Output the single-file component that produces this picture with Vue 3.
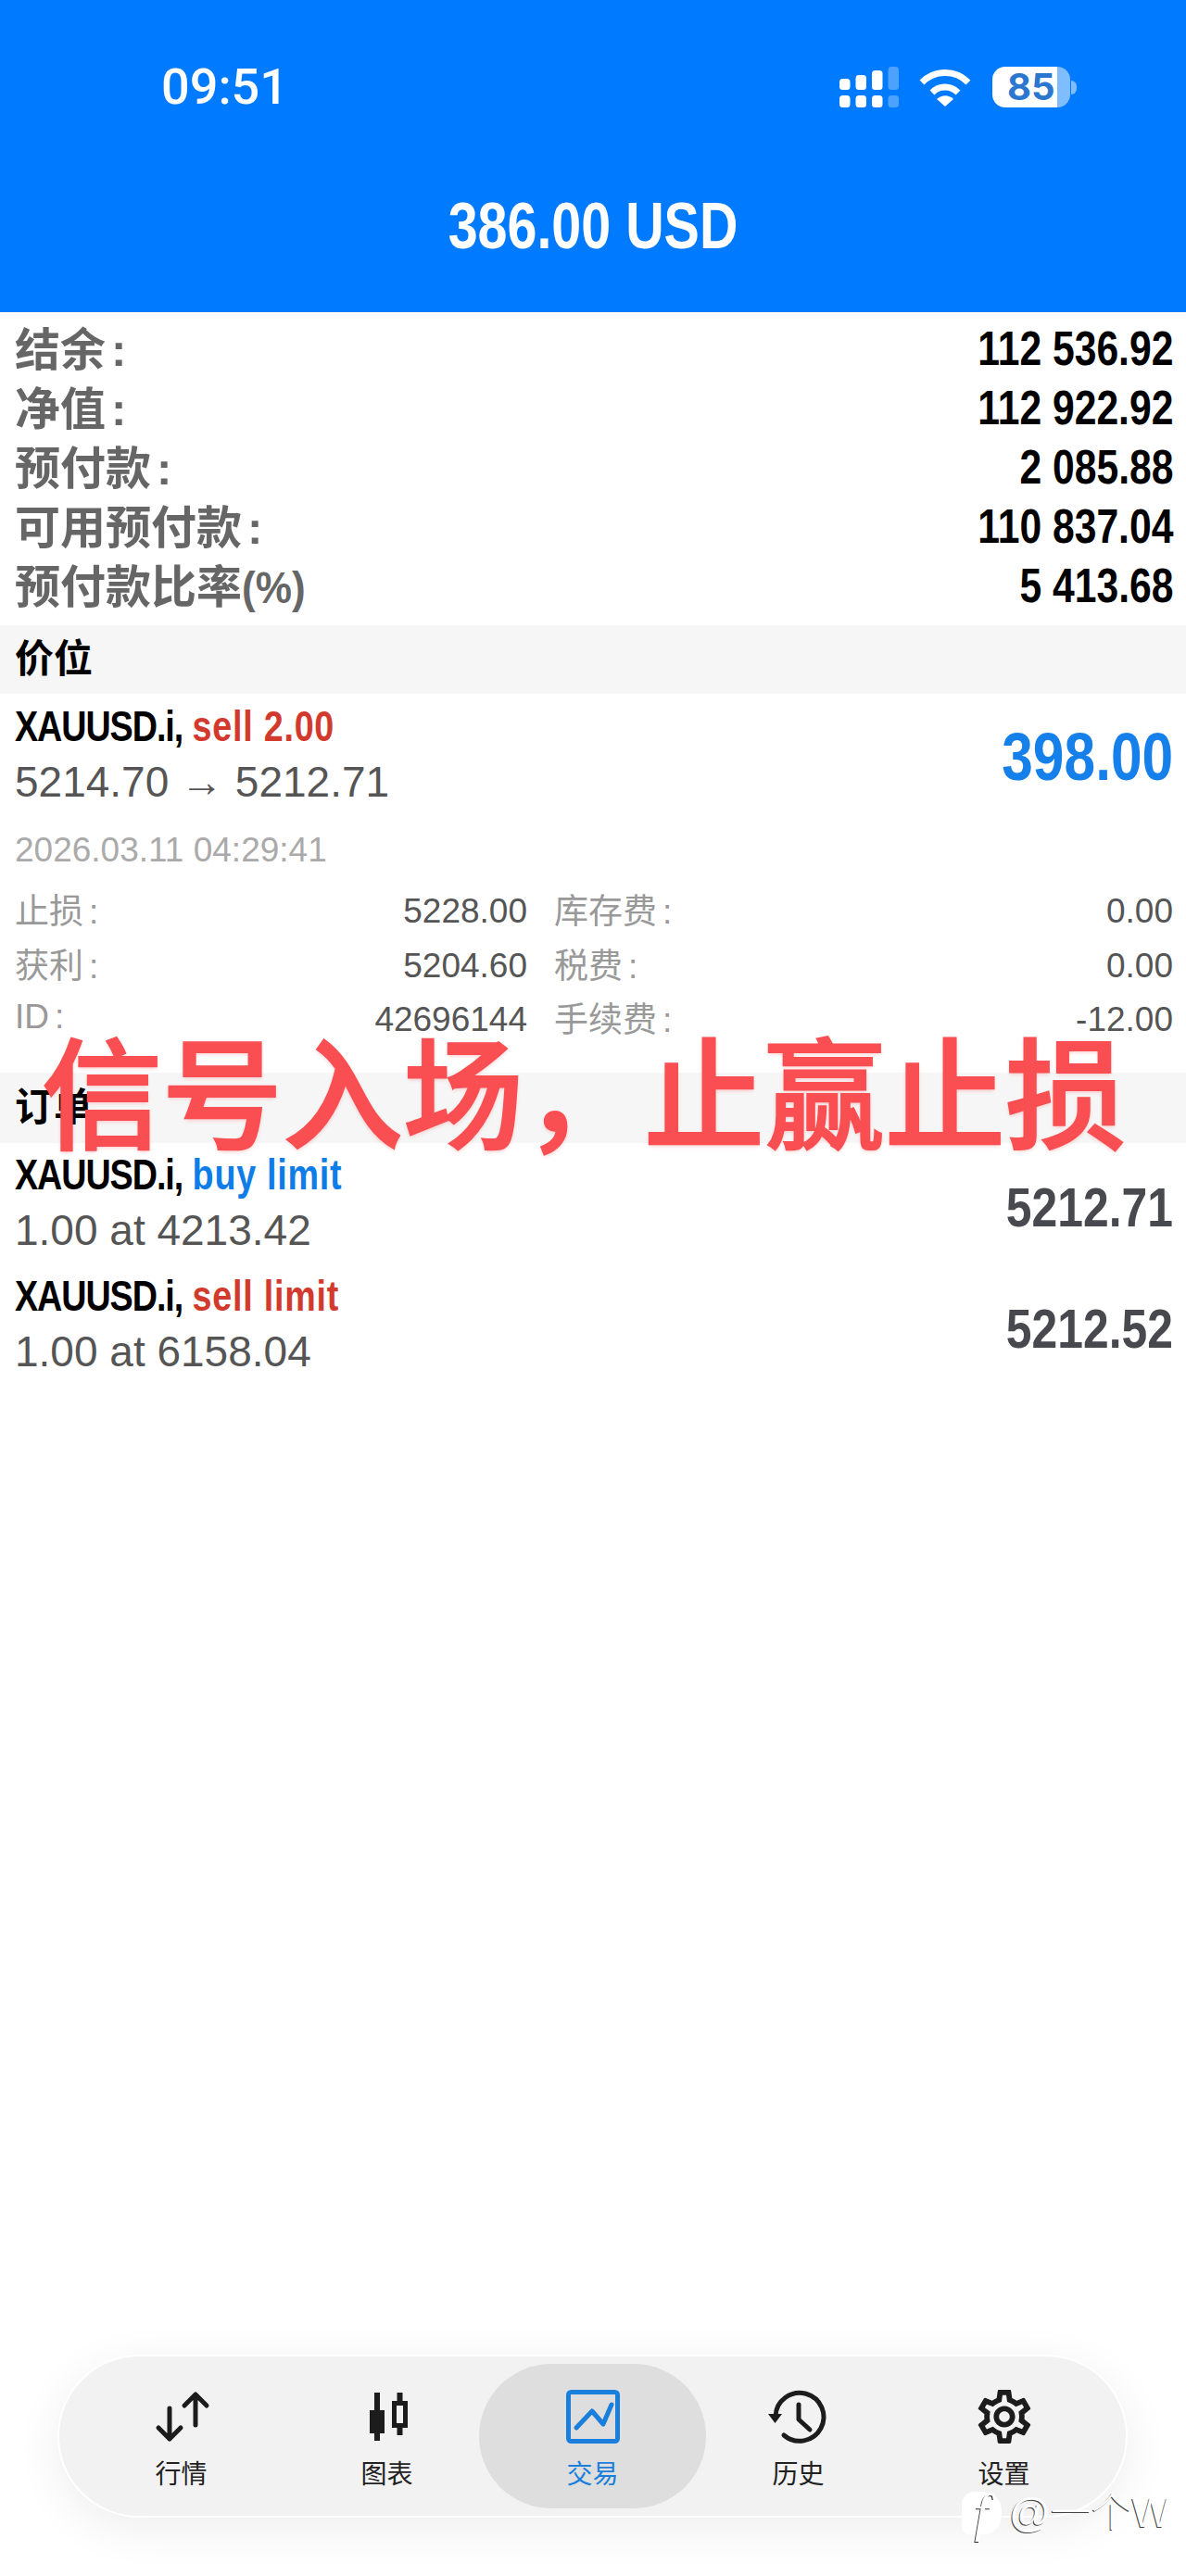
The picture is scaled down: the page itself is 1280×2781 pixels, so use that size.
<script setup>
const summary = [
  { label: "结余", colon: true, value: "112 536.92" },
  { label: "净值", colon: true, value: "112 922.92" },
  { label: "预付款", colon: true, value: "2 085.88" },
  { label: "可用预付款", colon: true, value: "110 837.04" },
  { label: "预付款比率", colon: false, suffix: "(%)", value: "5 413.68" },
];

const details = [
  { left: "止损", leftValue: "5228.00", right: "库存费", rightValue: "0.00" },
  { left: "获利", leftValue: "5204.60", right: "税费", rightValue: "0.00" },
  { left: "ID", leftValue: "42696144", right: "手续费", rightValue: "-12.00" },
];

const orders = [
  { side: "buy limit", sideClass: "buy", info: "1.00 at 4213.42", price: "5212.71" },
  { side: "sell limit", sideClass: "sell", info: "1.00 at 6158.04", price: "5212.52" },
];

const tabs = [
  { name: "行情", icon: "quotes" },
  { name: "图表", icon: "chart" },
  { name: "交易", icon: "trade", active: true },
  { name: "历史", icon: "history" },
  { name: "设置", icon: "settings" },
];
</script>

<template>
  <div class="page">
    <header class="header">
      <div class="status">
        <span class="time">09:51</span>
        <div class="status-icons">
          <svg class="signal" width="64" height="44" viewBox="0 0 64 44" fill="#fff">
            <rect x="0" y="13" width="11.5" height="12" rx="3.5" />
            <rect x="17.5" y="9" width="11.5" height="16" rx="3.5" />
            <rect x="35" y="4" width="11.5" height="21" rx="3.5" />
            <rect x="52.5" y="0" width="11.5" height="25" rx="3.5" opacity="0.3" />
            <rect x="0" y="31" width="11.5" height="13" rx="3.5" />
            <rect x="17.5" y="31" width="11.5" height="13" rx="3.5" />
            <rect x="35" y="31" width="11.5" height="13" rx="3.5" />
            <rect x="52.5" y="31" width="11.5" height="13" rx="3.5" opacity="0.3" />
          </svg>
          <svg class="wifi" width="58" height="42" viewBox="0 0 58 42" fill="none" stroke="#fff" stroke-width="7">
            <path d="M4 16C18 2 40 2 54 16" />
            <path d="M15 27C23 19 35 19 43 27" />
            <path d="M20 34C25 29 33 29 38 34L29 42Z" fill="#fff" stroke="none" />
          </svg>
          <div class="battery">
            <div class="battery-body">
              <span class="battery-text">85</span>
            </div>
            <div class="battery-nub"></div>
          </div>
        </div>
      </div>
      <div class="balance">386.00 USD</div>
    </header>

    <section class="summary">
      <div v-for="row in summary" :key="row.label" class="summary-row">
        <span class="summary-label">{{ row.label }}<span v-if="row.colon" class="colon">:</span><span v-if="row.suffix" class="suffix">{{ row.suffix }}</span></span>
        <span class="summary-value">{{ row.value }}</span>
      </div>
    </section>

    <div class="band">价位</div>

    <section class="position">
      <div class="trade-row">
        <div>
          <div class="symbol"><span class="name">XAUUSD.i,</span> <span class="side sell">sell 2.00</span></div>
          <div class="info">5214.70 → 5212.71</div>
        </div>
        <div class="profit">398.00</div>
      </div>
      <div class="date">2026.03.11 04:29:41</div>
      <div class="details">
        <template v-for="d in details" :key="d.left">
          <div class="detail">
            <span class="detail-label">{{ d.left }}<span class="colon-small">:</span></span>
            <span class="detail-value">{{ d.leftValue }}</span>
          </div>
          <div class="detail">
            <span class="detail-label">{{ d.right }}<span class="colon-small">:</span></span>
            <span class="detail-value">{{ d.rightValue }}</span>
          </div>
        </template>
      </div>
    </section>

    <div class="band band-orders">订单</div>

    <section class="orders">
      <div v-for="o in orders" :key="o.side" class="order-row">
        <div>
          <div class="symbol"><span class="name">XAUUSD.i,</span> <span class="side" :class="o.sideClass">{{ o.side }}</span></div>
          <div class="info">{{ o.info }}</div>
        </div>
        <div class="order-price">{{ o.price }}</div>
      </div>
    </section>

    <nav class="tabbar">
      <div v-for="tab in tabs" :key="tab.name" class="tab" :class="{ active: tab.active }">
        <svg v-if="tab.icon === 'quotes'" class="icon" viewBox="0 0 58 58" fill="none" stroke="#1c1c1c" stroke-width="5" stroke-linecap="round" stroke-linejoin="round">
          <path d="M16 20V53M4 41L16 53L28 41" />
          <path d="M44 38V5M32 17L44 5L56 17" />
        </svg>
        <svg v-else-if="tab.icon === 'chart'" class="icon" viewBox="0 0 58 58" fill="none" stroke="#1c1c1c" stroke-width="5">
          <path d="M18 3V55" stroke-width="6" />
          <rect x="10" y="22" width="16" height="25" fill="#1c1c1c" stroke="none" />
          <path d="M42.500 3V49" stroke-width="6" />
          <rect x="36.500" y="14.500" width="12" height="24" fill="#f2f2f3" />
        </svg>
        <svg v-else-if="tab.icon === 'trade'" class="icon" viewBox="0 0 58 58" fill="none" stroke="#1a7edc" stroke-width="5" stroke-linecap="round" stroke-linejoin="round">
          <rect x="2.500" y="2.500" width="53" height="53" rx="3" />
          <path d="M11 41L28 23L40 37L49 16" />
        </svg>
        <svg v-else-if="tab.icon === 'history'" class="icon" viewBox="0 0 58 58" fill="none" stroke="#1c1c1c" stroke-width="5" stroke-linecap="round" stroke-linejoin="round">
          <path d="M4 28A26 26 0 1 1 13 49" />
          <path d="M29 16V32L41 43" />
          <path d="M-4 26H11L3.500 36Z" fill="#1c1c1c" stroke="none" />
        </svg>
        <svg v-else class="icon" viewBox="2 2 20 20" fill="#1c1c1c">
          <path d="M19.43 12.98c.04-.32.07-.64.07-.98 0-.34-.03-.66-.07-.98l2.11-1.65c.19-.15.24-.42.12-.64l-2-3.46c-.09-.16-.26-.25-.44-.25-.06 0-.12.01-.17.03l-2.49 1c-.52-.4-1.08-.73-1.69-.98l-.38-2.65C14.46 2.18 14.25 2 14 2h-4c-.25 0-.46.18-.49.42l-.38 2.65c-.61.25-1.17.59-1.69.98l-2.49-1c-.06-.02-.12-.03-.18-.03-.17 0-.34.09-.43.25l-2 3.46c-.13.22-.07.49.12.64l2.11 1.65c-.04.32-.07.65-.07.98 0 .33.03.66.07.98l-2.11 1.65c-.19.15-.24.42-.12.64l2 3.46c.09.16.26.25.44.25.06 0 .12-.01.17-.03l2.49-1c.52.4 1.08.73 1.69.98l.38 2.65c.03.24.24.42.49.42h4c.25 0 .46-.18.49-.42l.38-2.65c.61-.25 1.17-.59 1.69-.98l2.49 1c.06.02.12.03.18.03.17 0 .34-.09.43-.25l2-3.46c.12-.22.07-.49-.12-.64l-2.11-1.65zm-1.98-1.71c.04.31.05.52.05.73 0 .21-.02.43-.05.73l-.14 1.13.89.7 1.08.84-.7 1.21-1.27-.51-1.04-.42-.9.68c-.43.32-.84.56-1.25.73l-1.06.43-.16 1.13-.2 1.35h-1.4l-.19-1.35-.16-1.13-1.06-.43c-.43-.18-.83-.41-1.23-.71l-.91-.7-1.06.43-1.27.51-.7-1.21 1.08-.84.89-.7-.14-1.13c-.03-.31-.05-.54-.05-.74s.02-.43.05-.73l.14-1.13-.89-.7-1.08-.84.7-1.21 1.27.51 1.04.42.9-.68c.43-.32.84-.56 1.25-.73l1.06-.43.16-1.13.2-1.35h1.39l.19 1.35.16 1.13 1.06.43c.43.18.83.41 1.23.71l.91.7 1.06-.43 1.27-.51.7 1.21-1.07.85-.89.7.14 1.13zM12 8c-2.21 0-4 1.79-4 4s1.79 4 4 4 4-1.79 4-4-1.79-4-4-4zm0 6c-1.1 0-2-.9-2-2s.9-2 2-2 2 .9 2 2-.9 2-2 2z" />
        </svg>
        <span class="tab-name">{{ tab.name }}</span>
      </div>
    </nav>

    <!-- caption pasted over the screenshot -->
    <div class="caption">信号入场，止赢止损</div>

    <!-- watermark -->
    <div class="watermark">
      <span class="mark-logo">f</span>
      <span class="mark-text">@一个W</span>
    </div>
  </div>
</template>

<style scoped>
.page {
  position: relative;
  display: flex;
  flex-direction: column;
  width: 1280px;
  height: 2781px;
  overflow: hidden;
  background: #fff;
  font-family: "Liberation Sans", "Noto Sans CJK SC", sans-serif;
}

.header {
  height: 337px;
  padding: 72px 118px 0 174px;
  box-sizing: border-box;
  flex-shrink: 0;
  background: #007aff;
  color: #fff;
}

.status {
  display: flex;
  align-items: center;
  justify-content: space-between;
  height: 44px;
}

.time {
  font-family: Roboto, sans-serif;
  font-size: 54px;
  font-weight: 500;
  line-height: 44px;
}

.status-icons {
  display: flex;
  align-items: center;
}

.wifi {
  margin-left: 21px;
}

.battery {
  display: flex;
  align-items: center;
  margin-left: 22px;
}

.battery-body {
  display: flex;
  align-items: center;
  width: 84px;
  height: 44px;
  padding-left: 16px;
  box-sizing: border-box;
  border-radius: 14px;
  background: linear-gradient(to right, #fff 83%, rgba(255, 255, 255, 0.5) 83%);
}

.battery-text {
  font-family: Inter, sans-serif;
  font-size: 40px;
  font-weight: 700;
  line-height: 44px;
  color: #2b77d0;
}

.battery-nub {
  width: 6px;
  height: 15px;
  margin-left: 1px;
  border-radius: 0 6px 6px 0;
  background: rgba(255, 255, 255, 0.5);
}

/* the app's bold latin face is condensed, no such family is installed */
.balance {
  margin: 88px 0 0 -174px;
  width: 1280px;
  font-size: 70px;
  font-weight: 700;
  line-height: 80px;
  text-align: center;
  transform: scaleX(0.82);
}

.summary {
  padding: 7px 14px 11px 16px;
}

.summary-row {
  display: flex;
  align-items: center;
  justify-content: space-between;
  height: 64px;
}

.summary-label {
  padding-bottom: 6px;
  font-size: 49px;
  font-weight: 700;
  color: #666;
}

.colon {
  margin-left: 6px;
}

.suffix {
  display: inline-block;
  transform: scaleX(0.9);
  transform-origin: left;
}

.summary-value {
  font-size: 52px;
  font-weight: 700;
  color: #000;
  transform: scaleX(0.82);
  transform-origin: right;
}

.band {
  height: 74px;
  padding-left: 16px;
  flex-shrink: 0;
  background: #f6f6f6;
  font-size: 42px;
  font-weight: 700;
  line-height: 74px;
  color: #000;
}

.band-orders {
  height: 76px;
  line-height: 76px;
  margin-top: 28px;
}

.position {
  padding: 5px 14px 0 16px;
}

.trade-row,
.order-row {
  display: flex;
  align-items: center;
  justify-content: space-between;
}

.symbol {
  font-size: 46px;
  font-weight: 700;
  line-height: 60px;
  color: #000;
  white-space: nowrap;
  transform: scaleX(0.82);
  transform-origin: left;
}

.name {
  letter-spacing: -1.300px;
}

.side {
  letter-spacing: 0.900px;
}

.sell {
  color: #d23a2e;
}

.buy {
  color: #0f7de8;
}

.info {
  font-size: 46px;
  line-height: 60px;
  color: #555;
}

.profit {
  padding-top: 6px;
  font-size: 72px;
  font-weight: 700;
  color: #1580ea;
  transform: scaleX(0.84);
  transform-origin: right;
}

.date {
  margin-top: 22px;
  font-size: 37px;
  line-height: 44px;
  color: #aaa;
}

.details {
  display: grid;
  grid-template-columns: 553px 668px;
  column-gap: 29px;
  margin-top: 14px;
}

.detail {
  display: flex;
  align-items: center;
  justify-content: space-between;
  height: 58.500px;
  font-size: 37px;
}

.detail-label {
  padding-bottom: 4px;
  color: #999;
}

.colon-small {
  margin-left: 6px;
}

.detail-value {
  padding-top: 2px;
  color: #555;
}

.orders {
  padding: 3px 14px 0 16px;
}

.order-row {
  height: 131px;
  box-sizing: border-box;
  padding-bottom: 8px;
}

.order-price {
  padding-top: 10px;
  font-size: 60px;
  font-weight: 700;
  color: #48484f;
  transform: scaleX(0.83);
  transform-origin: right;
}

.tabbar {
  display: flex;
  justify-content: center;
  position: relative;
  width: 1155px;
  height: 176px;
  box-sizing: border-box;
  margin: auto 0 63px 62px;
  border: 2px solid #fff;
  border-radius: 88px;
  background: #f2f2f3;
  box-shadow: 0 12px 50px rgba(0, 0, 0, 0.07);
}

.tab {
  position: relative;
  display: flex;
  flex-direction: column;
  align-items: center;
  width: 222px;
  padding-top: 36px;
  box-sizing: border-box;
  font-family: "Noto Sans CJK SC", sans-serif;
  color: #222;
}

.tab.active {
  color: #1a7edc;
}

/* the grey capsule is wider than the tab it sits behind */
.tab.active::before {
  content: "";
  position: absolute;
  top: 8px;
  left: -12px;
  width: 245px;
  height: 156px;
  border-radius: 78px;
  background: #dedede;
}

.icon {
  position: relative;
  width: 58px;
  height: 58px;
  overflow: visible;
}

.tab-name {
  position: relative;
  margin-top: 11px;
  font-size: 28px;
  line-height: 40px;
}

.caption {
  position: absolute;
  top: 1098px;
  left: 45px;
  font-family: "Noto Sans CJK SC", sans-serif;
  font-size: 130px;
  font-weight: 500;
  line-height: 150px;
  white-space: nowrap;
  color: #fa4f52;
  -webkit-text-stroke: 2px #fa4f52;
  text-shadow: 0 2px 4px rgba(250, 79, 82, 0.3);
}

.watermark {
  position: absolute;
  top: 2688px;
  left: 1038px;
  display: flex;
  align-items: center;
  font-family: "Liberation Sans", "Noto Sans CJK SC", sans-serif;
  color: #fff;
}

.mark-logo {
  width: 43px;
  height: 46px;
  border-radius: 14px 20px 20px 8px;
  background: #fff;
  font-family: "Liberation Serif", serif;
  font-size: 56px;
  font-style: italic;
  line-height: 46px;
  text-align: center;
  color: #fff;
  text-shadow: -1px 1px 0 #222;
}

.mark-text {
  margin-left: 8px;
  font-size: 44px;
  font-weight: 300;
  line-height: 50px;
  white-space: nowrap;
  text-shadow: -1px 1px 0 #444;
}
</style>
